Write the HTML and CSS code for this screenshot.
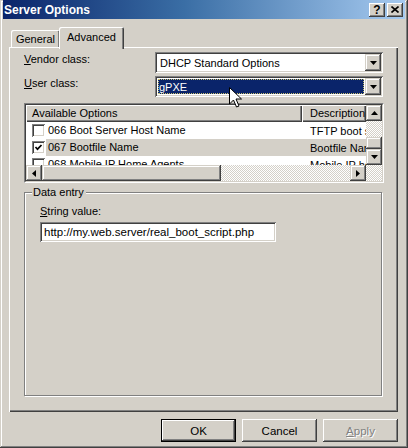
FILE: index.html
```html
<!DOCTYPE html>
<html>
<head>
<meta charset="utf-8">
<title>Server Options</title>
<link rel="stylesheet" href="styles.css">
</head>
<body>
<div class="window">
  <div class="titlebar">
    <span class="title">Server Options</span>
    <div class="tbtns">
      <span class="tbtn q">?</span>
      <span class="tbtn"><svg width="8" height="7" viewBox="0 0 8 7"><path d="M0.5 0.5L7.5 6.5M7.5 0.5L0.5 6.5" stroke="#000" stroke-width="1.6"/></svg></span>
    </div>
  </div>

  <div class="tabs">
    <div class="tab general">General</div>
    <div class="tab active">Advanced</div>
  </div>

  <div class="panel">
    <div class="field-row">
      <span class="flabel"><u>V</u>endor class:</span>
      <div class="combo">
        <span class="combo-text">DHCP Standard Options</span>
        <span class="ddbtn"><svg width="7" height="4" viewBox="0 0 7 4"><path d="M0 0H7L3.5 4Z"/></svg></span>
      </div>
    </div>
    <div class="field-row">
      <span class="flabel"><u>U</u>ser class:</span>
      <div class="combo">
        <span class="combo-text sel"><span>gPXE</span></span>
        <span class="ddbtn"><svg width="7" height="4" viewBox="0 0 7 4"><path d="M0 0H7L3.5 4Z"/></svg></span>
      </div>
    </div>

    <div class="listview">
      <div class="lv-inner">
        <div class="lv-content">
          <div class="lv-header">
            <div class="hcell c1">Available Options</div>
            <div class="hcell c2">Description</div>
          </div>
          <div class="lv-row">
            <div class="cell c1"><span class="chk"></span><span class="ltext">066 Boot Server Host Name</span></div>
            <div class="cell c2">TFTP boot server host name</div>
          </div>
          <div class="lv-row selected">
            <div class="cell c1"><span class="chk"><svg width="9" height="9" viewBox="0 0 9 9"><polyline points="1.5,4 3.5,6.2 7.5,2" fill="none" stroke="#000" stroke-width="1.7"/></svg></span><span class="ltext">067 Bootfile Name</span></div>
            <div class="cell c2">Bootfile Name</div>
          </div>
          <div class="lv-row">
            <div class="cell c1"><span class="chk"></span><span class="ltext">068 Mobile IP Home Agents</span></div>
            <div class="cell c2">Mobile IP home agents</div>
          </div>
        </div>
        <div class="vscroll">
          <span class="sbtn"><svg width="7" height="4" viewBox="0 0 7 4"><path d="M3.5 0L7 4H0Z"/></svg></span>
          <span class="vtrack"><span class="vthumb"></span></span>
          <span class="sbtn"><svg width="7" height="4" viewBox="0 0 7 4"><path d="M0 0H7L3.5 4Z"/></svg></span>
        </div>
        <div class="hscroll">
          <span class="sbtn"><svg width="4" height="7" viewBox="0 0 4 7"><path d="M0 3.5L4 0V7Z"/></svg></span>
          <span class="hthumb"></span>
          <span class="htrack"></span>
          <span class="sbtn"><svg width="4" height="7" viewBox="0 0 4 7"><path d="M4 3.5L0 0V7Z"/></svg></span>
        </div>
        <div class="corner"></div>
      </div>
    </div>

    <div class="group">
      <span class="legend">Data entry</span>
      <div class="glabel"><u>S</u>tring value:</div>
      <div class="textbox">http://my.web.server/real_boot_script.php</div>
    </div>
  </div>

  <div class="buttons">
    <span class="btn default">OK</span>
    <span class="btn">Cancel</span>
    <span class="btn disabled"><u>A</u>pply</span>
  </div>

  <svg class="cursor" width="13" height="21" viewBox="0 0 13 21"><path d="M0.5 0.5V17L4.5 13L7.5 20L10 19L7 12H12.5Z" fill="#fff" stroke="#000" stroke-width="1"/></svg>
</div>
</body>
</html>
```

FILE: styles.css
```css
html, body {
  margin: 0;
  padding: 0;
  overflow: hidden;
  background: #d4d0c8;
}

.window {
  position: relative;
  width: 408px;
  height: 448px;
  box-sizing: border-box;
  padding: 0 3px 3px 3px;
  background: #d4d0c8;
  box-shadow: inset -1px -1px #404040, inset 1px 1px #d4d0c8, inset -2px -2px #808080, inset 2px 2px #fff;
  font-family: "Liberation Sans", Arial, sans-serif;
  font-size: 11px;
  color: #000;
}

u { text-decoration: underline; text-underline-offset: 1px; }

/* Title bar */
.titlebar {
  height: 19px;
  display: flex;
  align-items: center;
  justify-content: space-between;
  padding: 0 2px 0 1px;
  background: linear-gradient(to right, #0a246a 0%, #3a6ea5 45%, #a6caf0 100%);
}
.title {
  color: #fff;
  font-weight: bold;
  font-size: 12px;
}
.tbtns { display: flex; gap: 2px; }
.tbtn {
  width: 16px;
  height: 14px;
  display: flex;
  align-items: center;
  justify-content: center;
  background: #d4d0c8;
  box-shadow: inset -1px -1px #404040, inset 1px 1px #fff, inset -2px -2px #808080;
  font-weight: bold;
  font-size: 12px;
  line-height: 14px;
}

/* Tabs */
.tabs {
  height: 28px;
  display: flex;
  align-items: flex-end;
  padding-left: 8px;
  position: relative;
  z-index: 2;
}
.tab {
  display: flex;
  align-items: center;
  justify-content: center;
  background: #d4d0c8;
  border-radius: 2px 2px 0 0;
  box-shadow: inset 1px 1px #fff, inset -1px 0 #404040, inset -2px 0 #808080;
}
.tab.general {
  width: 49px;
  height: 17px;
  padding-top: 1px;
  box-sizing: border-box;
}
.tab.active {
  width: 65px;
  height: 22px;
  margin-left: -1px;
  margin-bottom: -2px;
  padding-bottom: 2px;
  box-sizing: border-box;
}

/* Panel */
.panel {
  position: relative;
  z-index: 1;
  margin-left: 6px;
  width: 389px;
  height: 365px;
  box-sizing: border-box;
  padding: 5px 14px 0 15px;
  background: #d4d0c8;
  box-shadow: inset 1px 1px #fff, inset -1px -1px #404040, inset -2px -2px #808080;
}

.field-row {
  display: grid;
  grid-template-columns: 131px 1fr;
  margin-bottom: 3px;
  margin-right: 1px;
}
.flabel {
  line-height: 14px;
}
.combo {
  height: 21px;
  box-sizing: border-box;
  padding: 2px;
  display: flex;
  background: #fff;
  box-shadow: inset 1px 1px #808080, inset -1px -1px #fff, inset 2px 2px #404040, inset -2px -2px #d4d0c8;
}
.combo-text {
  flex: 1;
  display: flex;
  align-items: center;
  padding-left: 3px;
  white-space: nowrap;
  overflow: hidden;
}
.combo-text.sel {
  margin: 1px;
  padding-left: 1px;
  background: #0a246a;
  color: #fff;
  outline: 1px dotted #c8c070;
  outline-offset: -1px;
}
.ddbtn {
  width: 16px;
  height: 17px;
  display: flex;
  align-items: center;
  justify-content: center;
  background: #d4d0c8;
  box-shadow: inset -1px -1px #404040, inset 1px 1px #d4d0c8, inset -2px -2px #808080, inset 2px 2px #fff;
}

/* List view */
.listview {
  margin-top: 6px;
  width: 360px;
  height: 80px;
  box-sizing: border-box;
  border: 1px solid;
  border-color: #808080 #fff #fff #808080;
}
.lv-inner {
  height: 78px;
  box-sizing: border-box;
  border: 1px solid;
  border-color: #404040 #d4d0c8 #d4d0c8 #404040;
  background: #fff;
  display: grid;
  grid-template-columns: 340px 16px;
  grid-template-rows: 60px 16px;
}
.lv-content {
  overflow: hidden;
}
.lv-header, .lv-row {
  display: grid;
  grid-template-columns: 276px 64px;
}
.lv-header {
  height: 17px;
}
.hcell {
  background: #d4d0c8;
  box-shadow: inset 1px 1px #fff, inset -1px -1px #404040, inset -2px -2px #808080;
  line-height: 16px;
  white-space: nowrap;
  overflow: hidden;
}
.hcell.c1 { padding-left: 6px; }
.hcell.c2 { padding-left: 8px; }
.lv-row {
  height: 17px;
}
.cell {
  display: flex;
  align-items: center;
  white-space: nowrap;
  overflow: hidden;
}
.cell.c1 { padding-left: 6px; }
.cell.c2 { padding-left: 8px; }
.ltext {
  flex: 1;
  height: 17px;
  line-height: 17px;
  margin-left: 1px;
  padding-left: 2px;
}
.lv-row.selected .ltext,
.lv-row.selected .cell.c2 {
  background: #d4d0c8;
}
.chk {
  width: 13px;
  height: 13px;
  flex: none;
  box-sizing: border-box;
  background: #fff;
  box-shadow: inset 1px 1px #808080, inset -1px -1px #fff, inset 2px 2px #404040, inset -2px -2px #d4d0c8;
  display: flex;
  align-items: center;
  justify-content: center;
}

.sbtn {
  width: 16px;
  height: 16px;
  flex: none;
  display: flex;
  align-items: center;
  justify-content: center;
  background: #d4d0c8;
  box-shadow: inset -1px -1px #404040, inset 1px 1px #d4d0c8, inset -2px -2px #808080, inset 2px 2px #fff;
}
.vscroll {
  display: flex;
  flex-direction: column;
}
.vtrack {
  flex: 1;
  display: flex;
  flex-direction: column;
  justify-content: flex-end;
  background: repeating-conic-gradient(#fff 0 25%, #d4d0c8 0 50%) 0 0 / 2px 2px;
}
.vthumb {
  height: 12px;
  background: #d4d0c8;
  box-shadow: inset -1px -1px #404040, inset 1px 1px #d4d0c8, inset -2px -2px #808080, inset 2px 2px #fff;
}
.hscroll {
  display: flex;
}
.hthumb {
  width: 179px;
  background: #d4d0c8;
  box-shadow: inset -1px -1px #404040, inset 1px 1px #d4d0c8, inset -2px -2px #808080, inset 2px 2px #fff;
}
.htrack {
  flex: 1;
  background: repeating-conic-gradient(#fff 0 25%, #d4d0c8 0 50%) 0 0 / 2px 2px;
}
.corner {
  background: repeating-conic-gradient(#fff 0 25%, #d4d0c8 0 50%) 0 0 / 2px 2px;
}

/* Group box */
.group {
  position: relative;
  margin-top: 9px;
  width: 358px;
  height: 204px;
  box-sizing: border-box;
  border: 1px solid #808080;
  box-shadow: inset 1px 1px #fff, 1px 1px #fff;
  padding: 11px 0 0 15px;
}
.legend {
  position: absolute;
  left: 7px;
  top: -7px;
  padding: 0 2px 0 1px;
  line-height: 13px;
  background: #d4d0c8;
}
.glabel {
  line-height: 14px;
}
.textbox {
  margin-top: 4px;
  width: 236px;
  height: 20px;
  box-sizing: border-box;
  padding-left: 4px;
  line-height: 20px;
  background: #fff;
  white-space: nowrap;
  overflow: hidden;
  font-size: 11.5px;
  box-shadow: inset 1px 1px #808080, inset -1px -1px #fff, inset 2px 2px #404040, inset -2px -2px #d4d0c8;
}

/* Buttons */
.buttons {
  margin-top: 7px;
  padding-right: 7px;
  display: flex;
  justify-content: flex-end;
  gap: 6px;
}
.btn {
  width: 75px;
  height: 23px;
  box-sizing: border-box;
  display: flex;
  align-items: center;
  justify-content: center;
  background: #d4d0c8;
  font-size: 11.5px;
  box-shadow: inset -1px -1px #404040, inset 1px 1px #fff, inset -2px -2px #808080;
}
.btn.default {
  box-shadow: inset 0 0 0 1px #000, inset -2px -2px #404040, inset 2px 2px #fff, inset -3px -3px #808080;
}
.btn.disabled {
  color: #808080;
  text-shadow: 1px 1px 0 #fff;
}

.cursor {
  position: absolute;
  left: 229px;
  top: 87px;
  z-index: 5;
}
```
